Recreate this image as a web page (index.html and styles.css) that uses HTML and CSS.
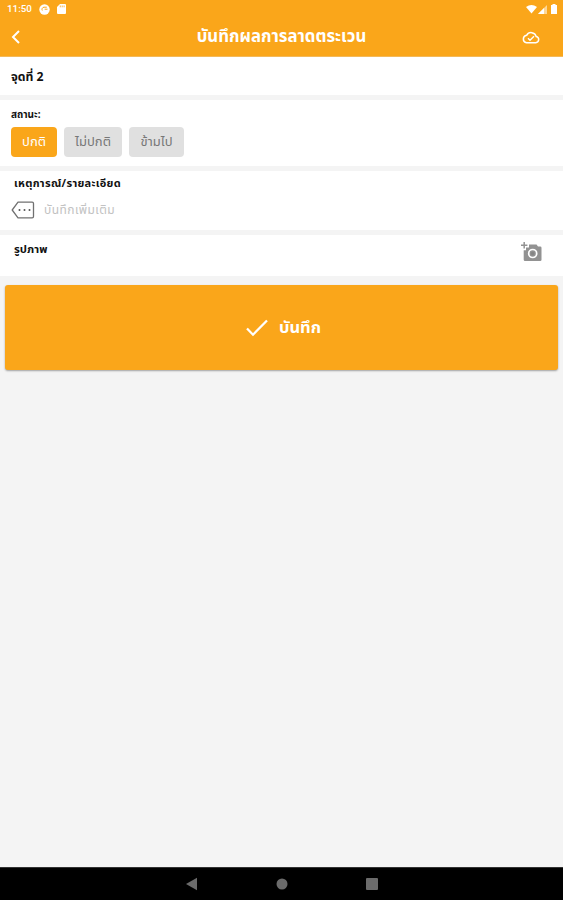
FILE: index.html
```
<!DOCTYPE html>
<html lang="th">
<head>
    <meta charset="UTF-8">
    <meta name="viewport" content="width=device-width, initial-scale=1.0">
    <title>บันทึกผลการลาดตระเวน</title>
    <link rel="stylesheet" href="styles.css">
</head>
<body>
    <header class="header">
        <div class="status-bar">
            <span class="clock">11:50</span>
            <svg class="status-app" width="11" height="11" viewBox="0 0 11 11">
                <circle cx="5.5" cy="5.5" r="5.2" fill="#fff"/>
                <path d="M7.800 3.200H5A2.200 2.200 0 0 0 3.300 6.500M5.600 5.200H8.500" fill="none" stroke="#faa61a" stroke-width="1"/>
            </svg>
            <svg class="status-sd" width="9" height="10" viewBox="0 0 9 10">
                <path d="M3 0h5a1 1 0 0 1 1 1v8a1 1 0 0 1-1 1H1a1 1 0 0 1-1-1V3z" fill="#fff"/>
                <path d="M3.300 1.500v1.800M5.200 1.500v1.800M7.100 1.500v1.800" stroke="#faa61a" stroke-width=".8"/>
            </svg>
            <svg class="status-signal" width="32" height="11" viewBox="0 0 32 11">
                <path d="M0 3Q5.500-1 11 3L5.500 9.500z" fill="#fff"/>
                <path d="M12 10L21 1v9z" fill="#fff" fill-opacity=".55"/>
                <path d="M12 10L18 4v6z" fill="#fff"/>
                <path d="M26.500 1V0h3v1h1.500v9h-6V1z" fill="#fff"/>
            </svg>
        </div>
        <div class="title-bar">
            <svg class="back" width="10" height="16" viewBox="0 0 10 16">
                <path d="M8 2L2 8l6 6" fill="none" stroke="#fff" stroke-width="2"/>
            </svg>
            <h1>บันทึกผลการลาดตระเวน</h1>
            <svg class="cloud" width="18" height="13" viewBox="0 0 18 13">
                <path d="M4.500 11.800h9.300a3.200 3.200 0 0 0 .4-6.300A5.200 5.200 0 0 0 4.600 4.300a3.800 3.800 0 0 0-.1 7.500z" fill="none" stroke="#fff" stroke-width="1.500"/>
                <path d="M6 7.300l2 1.900 4-4" fill="none" stroke="#fff" stroke-width="1.400"/>
            </svg>
        </div>
    </header>

    <main>
        <section class="card point">
            <h2>จุดที่ 2</h2>
        </section>

        <section class="card status">
            <h3>สถานะ:</h3>
            <div class="options">
                <button class="option active"><span>ปกติ</span></button>
                <button class="option abnormal"><span>ไม่ปกติ</span></button>
                <button class="option skip"><span>ข้ามไป</span></button>
            </div>
        </section>

        <section class="card detail">
            <h3>เหตุการณ์/รายละเอียด</h3>
            <div class="note">
                <svg width="24" height="18" viewBox="0 0 24 18">
                    <path d="M7 1.200h14.200a1.300 1.300 0 0 1 1.300 1.300v13a1.300 1.300 0 0 1-1.300 1.300H7L1.200 9z" fill="none" stroke="#707070" stroke-width="1.300" stroke-linejoin="round"/>
                    <g fill="#555">
                        <circle cx="8.500" cy="9" r="1"/>
                        <circle cx="13.500" cy="9" r="1"/>
                        <circle cx="18.500" cy="9" r="1"/>
                    </g>
                </svg>
                <span class="placeholder">บันทึกเพิ่มเติม</span>
            </div>
        </section>

        <section class="card photo">
            <h3>รูปภาพ</h3>
            <svg width="21" height="20" viewBox="0 0 21 20">
                <path d="M8 2.500h7.500l1.500 2h2.200a1.300 1.300 0 0 1 1.300 1.300v11.900a1.300 1.300 0 0 1-1.300 1.300H4a1.300 1.300 0 0 1-1.300-1.300V8.300H5V5.500h3z" fill="#929292"/>
                <circle cx="11.700" cy="11.500" r="4" fill="none" stroke="#fff" stroke-width="1.700"/>
                <circle cx="11.700" cy="11.500" r="1.800" fill="#858585"/>
                <path d="M3.200 0v6.400M0 3.200h6.400" stroke="#929292" stroke-width="1.500"/>
            </svg>
        </section>

        <button class="save">
            <svg width="22" height="18" viewBox="0 0 22 18">
                <path d="M1 9.500l6 6.200L21 1.500" fill="none" stroke="#fff" stroke-width="2.300"/>
            </svg>
            <span>บันทึก</span>
        </button>
    </main>

    <nav class="nav-bar">
        <svg width="12" height="14" viewBox="0 0 12 14"><path d="M11 .8v12.400L0 7z" fill="#6b6b6b"/></svg>
        <svg width="12" height="12" viewBox="0 0 12 12"><circle cx="6" cy="6" r="5.500" fill="#6b6b6b"/></svg>
        <svg width="12" height="12" viewBox="0 0 12 12"><rect width="12" height="12" rx="1" fill="#6b6b6b"/></svg>
    </nav>
</body>
</html>
```
FILE: styles.css
```
* {
    box-sizing: border-box;
}
body {
    margin: 0;
    height: 900px;
    display: flex;
    flex-direction: column;
    background-color: #f4f4f4;
    font-family: "Noto Sans Thai", Kanit, Prompt, "Noto Sans", sans-serif;
    color: #111;
    white-space: nowrap;
}
h1, h2, h3 {
    margin: 0;
}
svg {
    display: block;
    flex: none;
}
button {
    border: 0;
    padding: 0;
    font-family: inherit;
}
.header {
    height: 57px;
    background-color: #faa61a;
    border-bottom: 1px solid #f3b95a;
    color: #fff;
}
.status-bar {
    display: flex;
    align-items: center;
    height: 18px;
    padding: 0 5px 0 7px;
}
.clock {
    width: 25px;
    font: 500 9.8px/18px Roboto, sans-serif;
}
.status-app {
    margin-left: 7px;
}
.status-sd {
    margin-left: 7px;
}
.status-signal {
    margin-left: auto;
}
.title-bar {
    display: grid;
    grid-template-columns: 30px 1fr 30px;
    align-items: center;
    height: 38px;
    padding: 0 11px;
}
.title-bar h1 {
    font-size: 16.8px;
    line-height: 38px;
    text-align: center;
}
.cloud {
    justify-self: end;
    margin-right: 12px;
}
.card {
    background-color: #fff;
    margin-bottom: 5px;
}
.card h3 {
    font-size: 10px;
    line-height: 16px;
}
.point {
    height: 38px;
    padding-left: 11px;
}
.point h2 {
    font-size: 12.2px;
    line-height: 40px;
}
.status {
    height: 66px;
    padding: 7px 11px 0;
}
.options {
    display: flex;
    gap: 7px;
    margin-top: 4px;
}
.option {
    width: 46px;
    height: 30px;
    border-radius: 4px;
    background-color: #e0e0e0;
    color: #777;
    font-size: 13px;
}
.option.active {
    background-color: #faa61a;
    color: #fff;
}
.option.abnormal {
    width: 58px;
}
.option.skip {
    width: 55px;
}
.detail {
    height: 59px;
    padding: 5px 11px 0;
}
.detail h3 {
    margin-left: 3px;
    font-size: 11px;
    letter-spacing: .3px;
}
.note {
    display: flex;
    align-items: center;
    height: 24px;
    margin-top: 6px;
}
.placeholder {
    margin-left: 9px;
    color: #c2c2c2;
    font-size: 12px;
    letter-spacing: .45px;
}
.photo {
    display: flex;
    justify-content: space-between;
    height: 41px;
    margin-bottom: 0;
    padding: 7px 21px 0 14px;
}
.photo h3 {
    font-size: 11.300px;
}
.save {
    display: flex;
    align-items: center;
    justify-content: center;
    width: 553px;
    height: 85px;
    margin: 9px auto 0;
    padding-left: 4px;
    border-radius: 3px;
    background-color: #faa61a;
    box-shadow: 0 1px 2px rgba(0, 0, 0, .35);
    color: #fff;
    font-size: 16.5px;
    font-weight: bold;
}
.save span {
    margin-left: 11px;
}
.nav-bar {
    display: flex;
    align-items: center;
    justify-content: center;
    gap: 78px;
    height: 33px;
    margin-top: auto;
    background-color: #000;
    border-top: 1px solid #333;
}
```
